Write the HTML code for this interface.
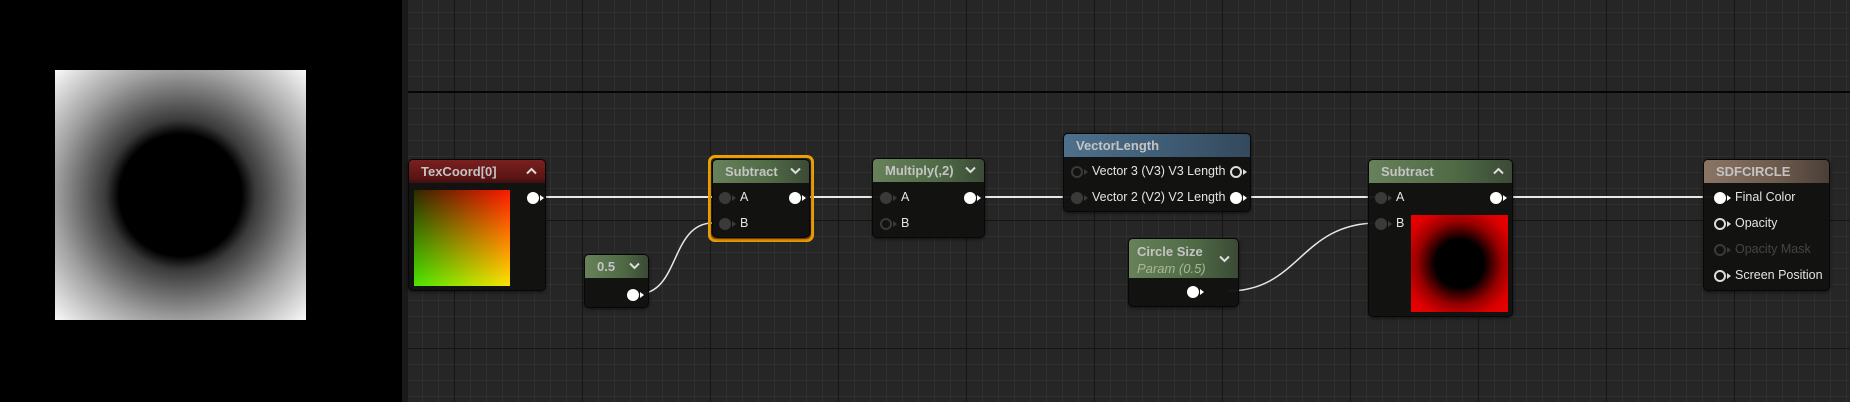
<!DOCTYPE html>
<html><head><meta charset="utf-8"><style>
*{margin:0;padding:0;box-sizing:border-box}
body{width:1850px;height:402px;overflow:hidden;background:#000;font-family:"Liberation Sans",sans-serif;position:relative}
#graph{position:absolute;left:402px;top:0;width:1448px;height:402px;background-color:#262626;
background-image:
linear-gradient(to right,#151515 0 1px,transparent 1px),
linear-gradient(to bottom,#151515 0 1px,transparent 1px),
linear-gradient(to right,#303030 0 1px,transparent 1px),
linear-gradient(to bottom,#303030 0 1px,transparent 1px);
background-size:128px 128px,128px 128px,16px 16px,16px 16px;
background-position:52px 0,0 92px,4px 0,0 12px}
#strip{position:absolute;left:402px;top:0;width:6px;height:402px;background:#1a1a1a}
#hline{position:absolute;left:408px;top:91px;width:1442px;height:2px;background:#050505}
#preview{position:absolute;left:55px;top:70px;width:251px;height:250px;
background:radial-gradient(circle at 50% 50%,#000 0,#000 61px,#101010 65px,#3a3a3a 75px,#a0a0a0 125px,#fff 180px)}
.node{position:absolute;background:rgba(18,19,17,.96);border:1px solid #070707;border-radius:5px;box-shadow:0 1px 3px rgba(0,0,0,.6)}
.hd{height:23px;border-radius:4px 4px 0 0;color:#c4c4c4;font-size:13px;font-weight:bold;padding:4px 0 0 12px;position:relative;white-space:nowrap}
.hd svg{position:absolute;right:8px;top:7px}
.red{background:linear-gradient(to bottom,#7a2020,#5a1414 80%,#3a1010)}
.grn{background:linear-gradient(to right,#67815a,#4f6a45 60%,#3b4a36)}
.blu{background:linear-gradient(to right,#4f708c,#3d5a72 60%,#34495c)}
.brn{background:linear-gradient(to right,#8a7565,#6d5a4c 60%,#4a3f38)}
.lbl{position:absolute;color:#e4e4e4;font-size:12.5px;white-space:nowrap}
.pin{position:absolute;width:12px;height:12px;border-radius:50%}
.pin.w{background:#fff;color:#fff}
.pin.o{border:2px solid #ddd;color:#ddd}
.pin.g{background:#3a3a3a;color:#3a3a3a}
.pin.go{border:2px solid #3a3a3a;color:#3a3a3a}
.pin::after{content:"";position:absolute;right:-5px;top:3px;border-left:4px solid currentColor;border-top:3px solid transparent;border-bottom:3px solid transparent}
.pin.o::after,.pin.go::after{top:1px;right:-7px}
</style></head><body>
<div id="preview"></div>
<div id="graph"></div>
<div id="strip"></div>
<div id="hline"></div>

<svg style="position:absolute;left:0;top:0" width="1850" height="402">
<g stroke="#e8e8e8" stroke-width="2" fill="none">
<path d="M538 197 H713"/>
<path d="M800 197 H880"/>
<path d="M974 197 H1072"/>
<path d="M1241 197 H1378"/>
<path d="M1503 197 H1715"/>
<path d="M638 294 C680 294 670 223 713 223" stroke-width="1.5"/>
<path d="M1228 291 C1300 291 1300 223 1378 223" stroke-width="1.5"/>
</g></svg>

<!-- TexCoord -->
<div class="node" style="left:408px;top:159px;width:138px;height:132px">
<div class="hd red">TexCoord[0]<svg width="11" height="8"><path d="M1 6.5 L5.5 2 L10 6.5" stroke="#ddd" stroke-width="2" fill="none"/></svg></div>
<div style="position:absolute;left:5px;top:30px;width:96px;height:96px;background:linear-gradient(to right,#302800,#ff1800)">
<div style="position:absolute;inset:0;background:linear-gradient(to bottom,#000,#20e000);mix-blend-mode:screen"></div></div>
<div class="pin w" style="left:118px;top:32px"></div>
</div>

<!-- 0.5 -->
<div class="node" style="left:584px;top:254px;width:65px;height:54px">
<div class="hd grn">0.5<svg width="11" height="8"><path d="M1 1.5 L5.5 6 L10 1.5" stroke="#ddd" stroke-width="2" fill="none"/></svg></div>
<div class="pin w" style="left:42px;top:34px"></div>
</div>

<!-- Subtract selected -->
<div style="position:absolute;left:708px;top:155px;width:106px;height:87px;border:3px solid #f0a000;border-radius:7px;box-shadow:inset 0 -2px 0 #c06000"></div>
<div class="node" style="left:712px;top:159px;width:98px;height:79px">
<div class="hd grn">Subtract<svg width="11" height="8"><path d="M1 1.5 L5.5 6 L10 1.5" stroke="#ddd" stroke-width="2" fill="none"/></svg></div>
<div class="pin g" style="left:6px;top:32px"></div><div class="lbl" style="left:27px;top:30px">A</div>
<div class="pin g" style="left:6px;top:58px"></div><div class="lbl" style="left:27px;top:56px">B</div>
<div class="pin w" style="left:76px;top:32px"></div>
</div>

<!-- Multiply -->
<div class="node" style="left:872px;top:158px;width:113px;height:80px">
<div class="hd grn">Multiply(,2)<svg width="11" height="8"><path d="M1 1.5 L5.5 6 L10 1.5" stroke="#ddd" stroke-width="2" fill="none"/></svg></div>
<div class="pin g" style="left:7px;top:33px"></div><div class="lbl" style="left:28px;top:31px">A</div>
<div class="pin go" style="left:7px;top:59px"></div><div class="lbl" style="left:28px;top:57px">B</div>
<div class="pin w" style="left:91px;top:33px"></div>
</div>

<!-- VectorLength -->
<div class="node" style="left:1063px;top:133px;width:188px;height:79px">
<div class="hd blu">VectorLength</div>
<div class="pin go" style="left:7px;top:32px"></div><div class="lbl" style="left:28px;top:30px">Vector 3 (V3) V3 Length</div>
<div class="pin o" style="left:166px;top:32px"></div>
<div class="pin g" style="left:7px;top:58px"></div><div class="lbl" style="left:28px;top:56px">Vector 2 (V2) V2 Length</div>
<div class="pin w" style="left:166px;top:58px"></div>
</div>

<!-- Circle Size -->
<div class="node" style="left:1128px;top:238px;width:111px;height:69px">
<div class="hd grn" style="height:39px;padding-left:8px;line-height:17px">Circle Size<br><i style="font-weight:normal;color:#a8b898">Param (0.5)</i><svg width="11" height="8" style="top:16px"><path d="M1 1.5 L5.5 6 L10 1.5" stroke="#ddd" stroke-width="2" fill="none"/></svg></div>
<div class="pin w" style="left:58px;top:47px"></div>
</div>

<!-- Subtract 2 -->
<div class="node" style="left:1368px;top:159px;width:145px;height:158px">
<div class="hd grn">Subtract<svg width="11" height="8"><path d="M1 6.5 L5.5 2 L10 6.5" stroke="#ddd" stroke-width="2" fill="none"/></svg></div>
<div class="pin g" style="left:6px;top:32px"></div><div class="lbl" style="left:27px;top:30px">A</div>
<div class="pin g" style="left:6px;top:58px"></div><div class="lbl" style="left:27px;top:56px">B</div>
<div class="pin w" style="left:121px;top:32px"></div>
<div style="position:absolute;left:42px;top:55px;width:97px;height:97px;background:radial-gradient(circle at 50% 50%,#000 0,#000 24px,#200 28px,#900 42px,#d00 56px,#e00 70px)"></div>
</div>

<!-- SDFCIRCLE -->
<div class="node" style="left:1703px;top:159px;width:127px;height:132px">
<div class="hd brn">SDFCIRCLE</div>
<div class="pin w" style="left:10px;top:32px"></div><div class="lbl" style="left:31px;top:30px">Final Color</div>
<div class="pin o" style="left:10px;top:58px"></div><div class="lbl" style="left:31px;top:56px">Opacity</div>
<div class="pin go" style="left:10px;top:84px"></div><div class="lbl" style="left:31px;top:82px;color:#444">Opacity Mask</div>
<div class="pin o" style="left:10px;top:110px"></div><div class="lbl" style="left:31px;top:108px">Screen Position</div>
</div>
</body></html>
